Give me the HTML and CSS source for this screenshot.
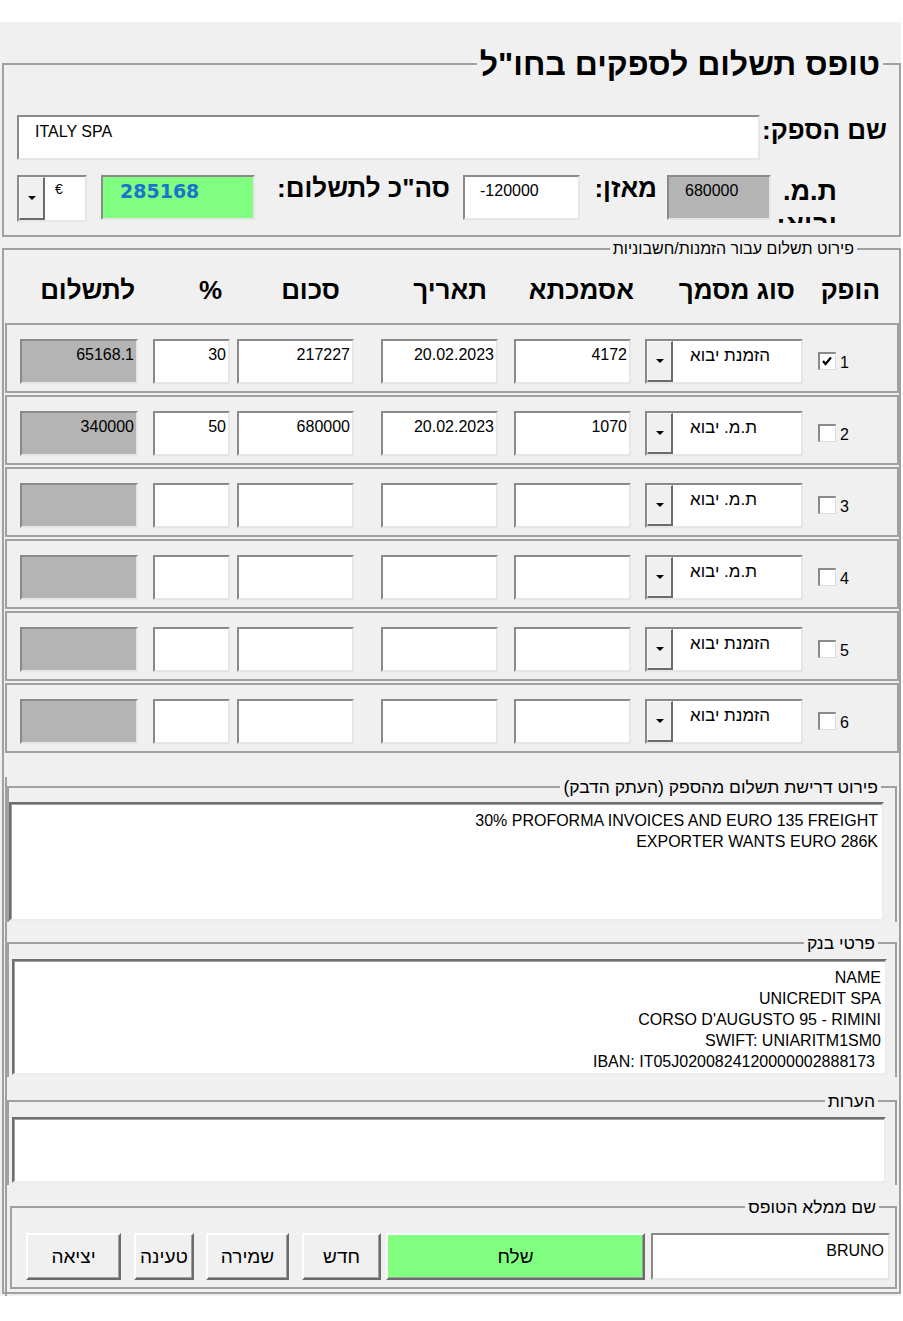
FILE: index.html
```html
<!DOCTYPE html>
<html lang="he">
<head>
<meta charset="utf-8">
<title>טופס תשלום לספקים בחו"ל</title>
<link rel="stylesheet" href="styles.css">
</head>
<body>
<div class="window" dir="rtl">
  <fieldset class="frame f1">
    <legend class="title">טופס תשלום לספקים בחו"ל</legend>
    <div class="f1-row row-a">
      <div class="blabel supplier-label">שם הספק:</div>
      <div class="field supplier" dir="ltr">ITALY SPA</div>
    </div>
    <div class="f1-row row-b">
      <div class="blabel import-label">ת.מ. יבוא:</div>
      <div class="field gray import" dir="ltr">680000</div>
      <div class="blabel balance-label">מאזן:</div>
      <div class="field balance" dir="ltr">-120000</div>
      <div class="blabel total-label">סה"כ לתשלום:</div>
      <div class="field green total" dir="ltr">285168</div>
      <div class="combo currency">
        <span class="combo-text cur">€</span>
        <span class="dd"><svg width="8" height="4" viewBox="0 0 8 4"><path d="M0 0H8L4 4Z" fill="#000"/></svg></span>
      </div>
    </div>
  </fieldset>

  <fieldset class="frame f2">
    <legend class="small-legend l2">פירוט תשלום עבור הזמנות/חשבוניות</legend>
    <div class="head">
      <div>הופק</div>
      <div>סוג מסמך</div>
      <div>אסמכתא</div>
      <div>תאריך</div>
      <div>סכום</div>
      <div>%</div>
      <div>לתשלום</div>
    </div>

    <div class="row">
      <span class="num">1</span>
      <span class="cb"><svg width="14" height="14" viewBox="0 0 14 14"><polyline points="2,6 4.5,9 10,2.5" fill="none" stroke="#000" stroke-width="2.2"/></svg></span>
      <div class="combo doc"><span class="combo-text">הזמנת יבוא</span><span class="dd"><svg width="8" height="4" viewBox="0 0 8 4"><path d="M0 0H8L4 4Z" fill="#000"/></svg></span></div>
      <div class="field cell ref" dir="ltr">4172</div>
      <div class="field cell date" dir="ltr">20.02.2023</div>
      <div class="field cell sum" dir="ltr">217227</div>
      <div class="field cell pct" dir="ltr">30</div>
      <div class="field cell gray pay" dir="ltr">65168.1</div>
    </div>

    <div class="row">
      <span class="num">2</span>
      <span class="cb"></span>
      <div class="combo doc"><span class="combo-text">ת.מ. יבוא</span><span class="dd"><svg width="8" height="4" viewBox="0 0 8 4"><path d="M0 0H8L4 4Z" fill="#000"/></svg></span></div>
      <div class="field cell ref" dir="ltr">1070</div>
      <div class="field cell date" dir="ltr">20.02.2023</div>
      <div class="field cell sum" dir="ltr">680000</div>
      <div class="field cell pct" dir="ltr">50</div>
      <div class="field cell gray pay" dir="ltr">340000</div>
    </div>

    <div class="row">
      <span class="num">3</span>
      <span class="cb"></span>
      <div class="combo doc"><span class="combo-text">ת.מ. יבוא</span><span class="dd"><svg width="8" height="4" viewBox="0 0 8 4"><path d="M0 0H8L4 4Z" fill="#000"/></svg></span></div>
      <div class="field cell ref"></div>
      <div class="field cell date"></div>
      <div class="field cell sum"></div>
      <div class="field cell pct"></div>
      <div class="field cell gray pay"></div>
    </div>

    <div class="row">
      <span class="num">4</span>
      <span class="cb"></span>
      <div class="combo doc"><span class="combo-text">ת.מ. יבוא</span><span class="dd"><svg width="8" height="4" viewBox="0 0 8 4"><path d="M0 0H8L4 4Z" fill="#000"/></svg></span></div>
      <div class="field cell ref"></div>
      <div class="field cell date"></div>
      <div class="field cell sum"></div>
      <div class="field cell pct"></div>
      <div class="field cell gray pay"></div>
    </div>

    <div class="row">
      <span class="num">5</span>
      <span class="cb"></span>
      <div class="combo doc"><span class="combo-text">הזמנת יבוא</span><span class="dd"><svg width="8" height="4" viewBox="0 0 8 4"><path d="M0 0H8L4 4Z" fill="#000"/></svg></span></div>
      <div class="field cell ref"></div>
      <div class="field cell date"></div>
      <div class="field cell sum"></div>
      <div class="field cell pct"></div>
      <div class="field cell gray pay"></div>
    </div>

    <div class="row">
      <span class="num">6</span>
      <span class="cb"></span>
      <div class="combo doc"><span class="combo-text">הזמנת יבוא</span><span class="dd"><svg width="8" height="4" viewBox="0 0 8 4"><path d="M0 0H8L4 4Z" fill="#000"/></svg></span></div>
      <div class="field cell ref"></div>
      <div class="field cell date"></div>
      <div class="field cell sum"></div>
      <div class="field cell pct"></div>
      <div class="field cell gray pay"></div>
    </div>

    <div class="lower">
      <fieldset class="frame sub f3">
        <legend class="small-legend big l3">פירוט דרישת תשלום מהספק (העתק הדבק)</legend>
        <div class="memo m3">
          <div dir="ltr">30% PROFORMA INVOICES AND EURO 135 FREIGHT</div>
          <div dir="ltr">EXPORTER WANTS EURO 286K</div>
        </div>
      </fieldset>

      <fieldset class="frame sub f4">
        <legend class="small-legend big l4">פרטי בנק</legend>
        <div class="memo m4">
          <div dir="ltr">NAME</div>
          <div dir="ltr">UNICREDIT SPA</div>
          <div dir="ltr">CORSO D'AUGUSTO 95 - RIMINI</div>
          <div dir="ltr">SWIFT: UNIARITM1SM0</div>
          <div dir="ltr" class="iban">IBAN: IT05J0200824120000002888173</div>
        </div>
      </fieldset>

      <fieldset class="frame sub f5">
        <legend class="small-legend big l5">הערות</legend>
        <div class="memo m5"></div>
      </fieldset>

      <fieldset class="frame sub f6">
        <legend class="small-legend big l6">שם ממלא הטופס</legend>
        <div class="actions">
          <div class="field filler" dir="ltr">BRUNO</div>
          <button class="btn send" type="button">שלח</button>
          <button class="btn new" type="button">חדש</button>
          <button class="btn save" type="button">שמירה</button>
          <button class="btn load" type="button">טעינה</button>
          <button class="btn exit" type="button">יציאה</button>
        </div>
      </fieldset>
    </div>
  </fieldset>
</div>
</body>
</html>
```

FILE: styles.css
```css
* { box-sizing: border-box; }

body {
  margin: 0;
  background: #ffffff;
  font-family: "Liberation Sans", Arial, "DejaVu Sans", sans-serif;
  font-size: 16px;
  color: #000;
}

.window {
  margin-top: 22px;
  width: 901px;
  height: 1274px;
  padding: 24px 0 0 2px;
  background: #f0f0f0;
}

/* group boxes */
.frame {
  margin: 0;
  padding: 0;
  min-width: 0;
  border: 2px solid #a0a0a0;
}

.title {
  margin-right: 16px;
  padding: 0 3px;
  font-size: 32px;
  font-weight: bold;
  line-height: 36px;
}

.small-legend {
  padding: 0 3px;
  font-size: 16px;
  line-height: 18px;
}

.small-legend.big {
  font-size: 17.5px;
  line-height: 20px;
}

/* frame 1 */
.f1 { height: 191px; }

.f1-row {
  display: flex;
  align-items: flex-start;
}

.row-a { margin-top: 33px; height: 45px; }
.row-b { margin-top: 15px; height: 47px; }

.blabel {
  font-size: 26px;
  font-weight: bold;
  line-height: 30px;
  white-space: nowrap;
}

.supplier-label { width: 122px; margin-right: 12px; }

.field {
  height: 45px;
  background: #ffffff;
  border-style: solid;
  border-width: 2px;
  border-color: #8a8a8a #e6e6e6 #e6e6e6 #8a8a8a;
  line-height: 18px;
  padding: 5px 2px 0 2px;
  white-space: nowrap;
  overflow: hidden;
}

.gray { background: #b4b4b4; }
.green { background: #80ff80; }

.supplier {
  width: 743px;
  margin-right: 5px;
  padding: 6px 4px 0 16px;
}

.import-label {
  width: 66px;
  height: 48px;
  margin-right: 62px;
  font-size: 27px;
  line-height: 33px;
  white-space: normal;
  overflow: hidden;
}

.import { width: 104px; padding-left: 16px; }

.balance-label { width: 87px; padding-right: 10px; margin-top: -2px; }
.balance { width: 117px; padding-left: 15px; }

.total-label { width: 195px; margin-right: 13px; margin-top: -2px; }
.total {
  width: 154px;
  padding: 4px 2px 0 17px;
  font-family: "DejaVu Sans", sans-serif;
  font-weight: bold;
  font-size: 19px;
  line-height: 21px;
  color: #1874cd;
}

/* combos */
.combo {
  display: flex;
  height: 45px;
  background: #ffffff;
  border-style: solid;
  border-width: 2px;
  border-color: #8a8a8a #e6e6e6 #e6e6e6 #8a8a8a;
}

.combo-text {
  flex: 1;
  text-align: left;
  padding: 5px 0 0 17px;
  font-size: 17px;
  line-height: 19px;
  white-space: nowrap;
}

.dd {
  width: 26px;
  height: 100%;
  display: flex;
  align-items: center;
  justify-content: center;
  background: #f0f0f0;
  border-style: solid;
  border-width: 1px 2px 2px 1px;
  border-color: #f8f8f8 #6b6b6b #6b6b6b #f8f8f8;
}

.currency {
  width: 70px;
  height: 47px;
  margin-right: 14px;
}

.cur {
  font-size: 14px;
  padding: 3px 0 0 10px;
}

/* frame 2 */
.f2 {
  margin-top: 3px;
  height: 1054px;
}

.l2 { margin-right: 42px; }

.head {
  height: 65px;
  display: grid;
  grid-template-columns: 85px 161px 147px 147px 118px 87px 1fr;
  align-items: center;
  padding-right: 19px;
  font-size: 26px;
  font-weight: bold;
  white-space: nowrap;
}

.row {
  height: 70px;
  margin: 0 0 2px 1px;
  border: 2px solid #a0a0a0;
  display: flex;
  align-items: flex-start;
  padding: 14px 48px 0 0;
}

.num {
  width: 10px;
  margin: 15px 0 0 3px;
  line-height: 18px;
  text-align: right;
}

.cb {
  width: 18px;
  height: 18px;
  margin: 13px 0 0 15px;
  background: #ffffff;
  border-style: solid;
  border-width: 2px 1px 1px 2px;
  border-color: #8a8a8a #dcdcdc #dcdcdc #8a8a8a;
  display: flex;
  align-items: center;
  justify-content: flex-start;
}

.doc { width: 158px; margin-left: 14px; }

.cell { text-align: right; padding-right: 2px; }
.ref { width: 117px; margin-left: 16px; }
.date { width: 117px; margin-left: 27px; }
.sum { width: 117px; margin-left: 7px; }
.pct { width: 77px; margin-left: 15px; }
.pay { width: 118px; }

/* lower part */
.lower {
  margin-left: 1px;
  height: 537px;
  border-left: 2px solid #a0a0a0;
}

.sub {
  margin-right: 2px;
  border-bottom: none;
}

.memo {
  background: #ffffff;
  border-style: solid;
  border-width: 2px;
  border-color: #6e6e6e #ececec #ececec #6e6e6e;
  box-shadow: inset 1px 1px 0 #a0a0a0;
  line-height: 21px;
  padding: 6px 4px 0 4px;
  text-align: right;
}

.f3 { margin-top: 24px; height: 145px; }
.l3 { margin-right: 14px; }
.m3 { margin: 5px 11px 0 0; width: 875px; height: 119px; padding-right: 4px; }

.f4 { margin-top: 11px; height: 144px; }
.l4 { margin-right: 17px; }
.m4 { margin: 6px 8px 0 0; width: 875px; height: 116px; }
.iban { padding-right: 6px; }

.f5 { margin-top: 14px; height: 94px; }
.l5 { margin-right: 17px; }
.m5 { margin: 6px 9px 0 0; width: 874px; height: 66px; }

.f6 {
  margin-top: 12px;
  margin-left: 3px;
  height: 92px;
  border-bottom: 2px solid #a0a0a0;
}
.l6 { margin-right: 16px; }

.actions {
  display: flex;
  align-items: flex-start;
  margin: 16px 5px 0 0;
  height: 47px;
}

.filler {
  width: 239px;
  height: 47px;
  text-align: right;
  padding: 7px 4px 0 2px;
}

.btn {
  height: 47px;
  margin: 0;
  padding: 0;
  font-family: "Liberation Sans", Arial, "DejaVu Sans", sans-serif;
  font-size: 19px;
  color: #000;
  background: #f0f0f0;
  border-style: solid;
  border-width: 2px;
  border-color: #ffffff #6b6b6b #6b6b6b #ffffff;
  box-shadow: inset -1px -1px 0 #a0a0a0;
}

.send { width: 259px; margin-right: 6px; background: #80ff80; }
.new { width: 79px; margin-right: 5px; }
.save { width: 83px; margin-right: 13px; }
.load { width: 60px; margin-right: 12px; }
.exit { width: 95px; margin-right: 13px; }
```
